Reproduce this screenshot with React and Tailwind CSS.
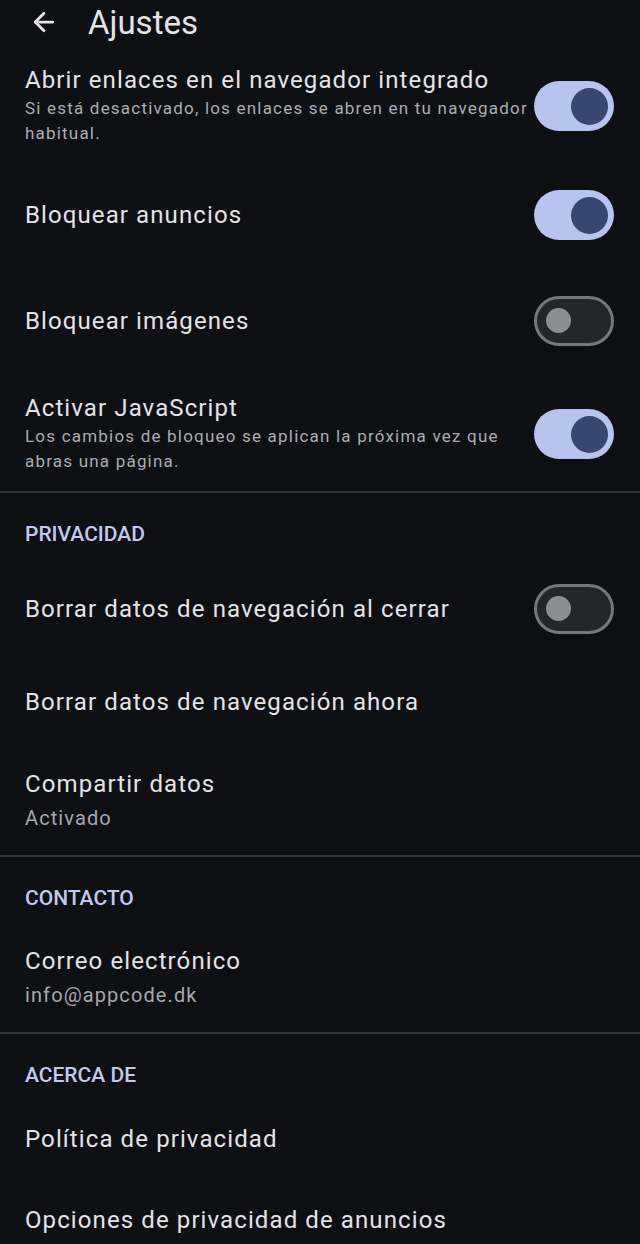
import React from 'react';
import { ArrowLeft } from 'lucide-react';

const Toggle = ({ on }) =>
  on ? (
    <div className="w-[80px] h-[50px] shrink-0 rounded-full bg-[#b8c4ef] flex items-center justify-end pr-[6px]">
      <div className="w-[37px] h-[37px] rounded-full bg-[#3b4670]" />
    </div>
  ) : (
    <div className="w-[80px] h-[50px] shrink-0 rounded-full bg-[#24262b] border-[3px] border-[#76777c] flex items-center pl-[9px]">
      <div className="w-[25px] h-[25px] rounded-full bg-[#8d8e93]" />
    </div>
  );

const Title = ({ children }) => (
  <div className="text-[24px] leading-[28px] tracking-[1.1px] text-[#e4e4e8] whitespace-nowrap">{children}</div>
);

const Summary = ({ children }) => (
  <div className="mt-[2px] text-[17px] leading-[25px] tracking-[1.2px] text-[#abacb2]">{children}</div>
);

const Value = ({ children }) => (
  <div className="mt-[7px] text-[20px] leading-[26px] tracking-[1.1px] text-[#a6a7ad]">{children}</div>
);

const Divider = () => <div className="h-[2px] bg-[#34353a]" />;

const SectionHeader = ({ children }) => (
  <div className="pl-[25px] pt-[29px] pb-[16px] text-[21px] leading-[24px] font-medium text-[#c3c9ee]">
    {children}
  </div>
);

export default function App() {
  return (
    <div
      className="w-[640px] h-[1244px] overflow-hidden bg-[#0e0f13]"
      style={{ fontFamily: 'Roboto, "Noto Sans", sans-serif' }}
    >
      {/* toolbar */}
      <div className="h-[44px] flex items-center pl-[29px]">
        <ArrowLeft className="w-[30px] h-[30px] text-[#e4e4e8]" strokeWidth={2.2} />
        <span className="ml-[29px] text-[33px] leading-none text-[#e4e4e8]">Ajustes</span>
      </div>

      {/* contenido */}
      <div className="flex items-center pl-[25px] pr-[26px] pt-[22px] pb-[16px]">
        <div className="flex-1 min-w-0">
          <Title>Abrir enlaces en el navegador integrado</Title>
          <Summary>Si está desactivado, los enlaces se abren en tu navegador habitual.</Summary>
        </div>
        <Toggle on />
      </div>

      <div className="h-[106px] flex items-center pl-[25px] pr-[26px]">
        <div className="flex-1"><Title>Bloquear anuncios</Title></div>
        <Toggle on />
      </div>

      <div className="h-[105px] flex items-center pl-[25px] pr-[26px]">
        <div className="flex-1"><Title>Bloquear imágenes</Title></div>
        <Toggle />
      </div>

      <div className="flex items-center pl-[25px] pr-[26px] pt-[21px] pb-[17px]">
        <div className="flex-1 min-w-0 pr-[20px]">
          <Title>Activar JavaScript</Title>
          <Summary>Los cambios de bloqueo se aplican la próxima vez que abras una página.</Summary>
        </div>
        <Toggle on />
      </div>

      <Divider />
      <SectionHeader>PRIVACIDAD</SectionHeader>

      <div className="h-[93px] flex items-center pl-[25px] pr-[26px]">
        <div className="flex-1"><Title>Borrar datos de navegación al cerrar</Title></div>
        <Toggle />
      </div>

      <div className="h-[93px] flex items-center pl-[25px] pr-[26px]">
        <Title>Borrar datos de navegación ahora</Title>
      </div>

      <div className="pl-[25px] pr-[26px] pt-[22px] pb-[24px]">
        <Title>Compartir datos</Title>
        <Value>Activado</Value>
      </div>

      <Divider />
      <SectionHeader>CONTACTO</SectionHeader>

      <div className="pl-[25px] pr-[26px] pt-[21px] pb-[24px]">
        <Title>Correo electrónico</Title>
        <Value>info@appcode.dk</Value>
      </div>

      <Divider />
      <SectionHeader>ACERCA DE</SectionHeader>

      <div className="pl-[25px] pr-[26px] pt-[22px] pb-[26px]">
        <Title>Política de privacidad</Title>
      </div>

      <div className="pl-[25px] pr-[26px] pt-[27px] pb-[26px]">
        <Title>Opciones de privacidad de anuncios</Title>
      </div>
    </div>
  );
}
